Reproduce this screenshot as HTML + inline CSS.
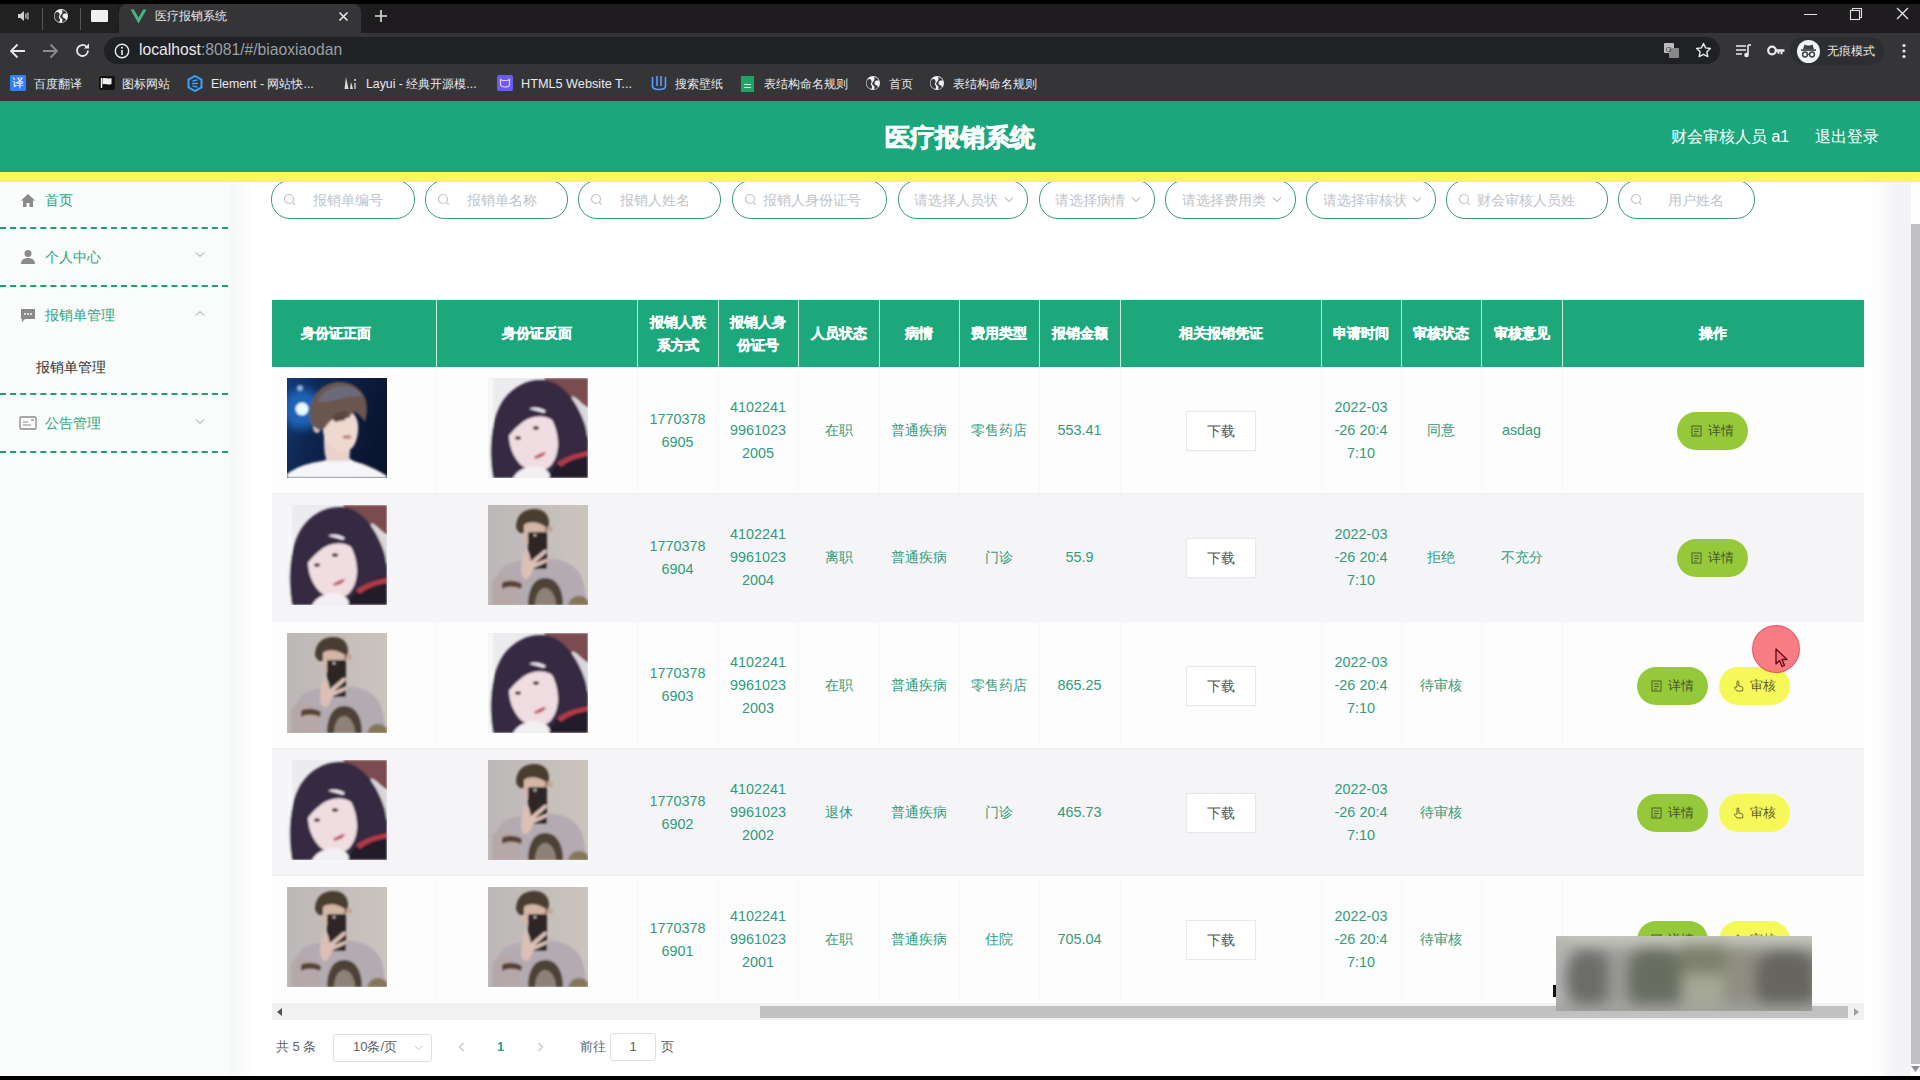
<!DOCTYPE html>
<html><head><meta charset="utf-8">
<style>
*{box-sizing:border-box;margin:0;padding:0}
html,body{width:1920px;height:1080px;overflow:hidden;background:#fff;font-family:"Liberation Sans",sans-serif;position:relative}
.a{position:absolute}
/* chrome */
#topblack{left:0;top:0;width:1920px;height:4px;background:#000}
#tabstrip{left:0;top:4px;width:1920px;height:29px;background:#1e1c1f}
#pinned{left:0;top:4px;width:118px;height:29px;background:#212121;border-radius:0 0 8px 0}
#acttab{left:119px;top:4px;width:242px;height:29px;background:#353538;border-radius:8px 8px 0 0}
#addr{left:0;top:33px;width:1920px;height:35px;background:#353538}
#urlbox{left:104px;top:37px;width:1616px;height:27px;background:#202124;border-radius:14px}
#bm{left:0;top:68px;width:1920px;height:33px;background:#353538}
.ct{color:#e8eaed;font-size:12px;white-space:nowrap;line-height:14px}
/* header */
#hdr{left:0;top:101px;width:1920px;height:71px;background:#1ba77b}
#yel{left:0;top:172px;width:1920px;height:10px;background:#f8f85a;z-index:5}
#side{left:0;top:182px;width:230px;height:898px;background:#fafbfb}
#sideshade{left:230px;top:182px;width:24px;height:898px;background:linear-gradient(90deg,#f6f7f7,#ffffff)}
.dash{left:0;width:228px;height:0;border-top:2px dashed #1f9f76}
.mi{font-size:14px;color:#2ea57c;white-space:nowrap;line-height:16px}

.pill{top:180px;height:38.5px;border:1.5px solid #3b9c7a;border-radius:19px;background:#fff}
.ph{top:191px;font-size:14px;line-height:18px;color:#c0c4cc;white-space:nowrap;overflow:hidden}
.th{-webkit-text-stroke:0.35px #fff;width:120px;display:flex;align-items:center;justify-content:center;text-align:center;color:#fff;font-weight:bold;font-size:14px;line-height:23px}
.td{width:120px;display:flex;align-items:center;justify-content:center;text-align:center;color:#339b7b;font-size:14.4px;line-height:23px}
.dl{width:70px;height:40px;border:1px solid #e8e8ea;background:#fff;border-radius:0;box-shadow:0 0 2px rgba(0,0,0,.04);font-size:14px;color:#555;line-height:38px;text-align:center}
.bt{width:71px;height:38px;border-radius:19px;font-size:13px;line-height:38px;text-align:center;white-space:nowrap;display:flex;align-items:center;justify-content:center;gap:6px}
.bd{background:#96c93a;color:#44562a}
.ba{background:#f6f85a;color:#5e5c2c}
.pg{font-size:13px;color:#606266;line-height:17px;white-space:nowrap}
</style></head><body>

<svg width="0" height="0" style="position:absolute">
<defs>
<filter id="bl" x="-5%" y="-5%" width="110%" height="110%"><feGaussianBlur stdDeviation="1.3"/></filter>
<filter id="bl2" x="-50%" y="-50%" width="200%" height="200%"><feGaussianBlur stdDeviation="4"/></filter>
<linearGradient id="boybg" x1="0" y1="0" x2="1" y2="0.3"><stop offset="0" stop-color="#143a78"/><stop offset="0.35" stop-color="#0e2650"/><stop offset="1" stop-color="#0a1530"/></linearGradient>
<linearGradient id="girlbg" x1="0" y1="0" x2="1" y2="0"><stop offset="0" stop-color="#eeecef"/><stop offset="1" stop-color="#e6dfe2"/></linearGradient>
<linearGradient id="selfbg" x1="0" y1="0" x2="1" y2="0"><stop offset="0" stop-color="#bcb8b8"/><stop offset="1" stop-color="#cbc4bd"/></linearGradient>
<clipPath id="cp"><rect width="100" height="100"/></clipPath>
</defs>
<symbol id="boy" viewBox="0 0 100 100">
<g clip-path="url(#cp)">
<rect width="100" height="100" fill="url(#boybg)"/>
<g filter="url(#bl)">
<circle cx="15" cy="31" r="20" fill="#1d64b8" filter="url(#bl2)"/>
<circle cx="15" cy="31" r="6.5" fill="#e8fbff"/>
<circle cx="13" cy="10" r="3" fill="#8fb2dc"/>
<path d="M0 96c8-6 18-10 30-12 6-1 10-2 12-4h20c3 3 8 4 14 6 10 4 18 8 24 12v2H0z" fill="#f6f5f7"/>
<path d="M37 55c0 12 0 22 3 28h22c1-8 2-18 0-28z" fill="#e8d2cb"/>
<path d="M36 42c0-6 6-12 14-12 12 0 20 6 21 16 1 10-2 20-6 24-4 4-10 5-14 3-8-3-14-10-15-20z" fill="#eed8d0"/>
<ellipse cx="30" cy="48" rx="4" ry="7" fill="#e2c8be"/>
<path d="M24 46c-4-16 2-34 18-40 14-5 30 0 36 14 3 8 2 16 0 24-4-6-8-10-12-10l-4 6h-14c-4 2-8 6-10 10l-6 2c-4-2-6-4-8-6z" fill="#6a5650"/>
<path d="M30 24c5-10 14-16 26-16 9 0 16 4 19 10-6 0-14 0-22 3-8 2-15 3-23 3z" fill="#6c6a7a"/>
<path d="M45 40c4-6 10-8 16-6l-3 8-10 2z" fill="#5a4640"/>
<ellipse cx="60" cy="59" rx="4.5" ry="2" fill="#c48a88"/>
</g></g>
</symbol>
<symbol id="girl" viewBox="0 0 100 100">
<g clip-path="url(#cp)">
<rect width="100" height="100" fill="#ecebee"/>
<g filter="url(#bl)">
<rect x="0" y="0" width="5" height="100" fill="#f8f8fa"/>
<path d="M56 0H100V30C90 22 76 16 62 10z" fill="#7a4c50"/>
<path d="M84 18C92 22 97 28 100 34V58L90 52z" fill="#dcd6da"/>
<path d="M5 100C0 72 3 42 14 24 26 6 46-2 64 4 80 10 92 30 98 50L100 62V100z" fill="#342c42"/>
<path d="M21 57C21 42 30 32 44 31 58 30 68 40 70 54 72 70 68 84 60 90 52 95 40 94 32 86 25 78 21 68 21 57z" fill="#f0dde1"/>
<path d="M19 60C21 42 31 28 46 24 56 22 66 26 73 33L68 45C62 39 54 37 46 39 36 41 28 49 19 60z" fill="#342c42"/>
<path d="M41 31C47 28 53 30 58 33L56 35C50 33 46 32 41 31z" fill="#eae6ee"/>
<path d="M63 40C70 52 72 66 68 84L75 88C79 70 77 50 70 38z" fill="#342c42"/>
<path d="M25 100C29 92 39 88 47 88 55 88 61 92 63 100z" fill="#f2f0f3"/>
<path d="M61 100C65 86 80 76 100 71V100z" fill="#231e2a"/>
<path d="M69 85C77 79 88 75 100 73V78C88 80 80 83 73 89z" fill="#b03a4a"/>
<ellipse cx="48" cy="50" rx="3.2" ry="1.8" fill="#3a2a2e"/>
<ellipse cx="30" cy="60" rx="3" ry="1.8" fill="#3a2a2e"/>
<path d="M46 79C50 76 54 74 58 74 57 78 52 80 47 81z" fill="#c4606a"/>
</g></g>
</symbol>
<symbol id="selfie" viewBox="0 0 100 100">
<g clip-path="url(#cp)">
<rect width="100" height="100" fill="url(#selfbg)"/>
<g filter="url(#bl)">
<path d="M4 100c0-18 4-34 14-40 12-6 26-5 36-6 14-1 26 2 34 10 8 8 10 22 10 36z" fill="#b3aab2"/>
<path d="M4 100V76c4-6 10-8 16-6 8 3 12 12 12 30z" fill="#b6a8a8"/>
<path d="M14 78c4-3 14-3 20 1l-1 5c-6-3-14-3-19 0z" fill="#5a4236"/>
<path d="M40 100c0-16 6-27 17-27s18 10 18 27z" fill="#4e4236"/>
<path d="M47 100c0-9 4-17 10-17s11 8 11 17z" fill="#8e8278"/>
<path d="M80 100c2-6 6-9 11-9 5 0 9 3 9 6v3z" fill="#857658"/>
<path d="M28 22c0-12 8-18 18-18 10 0 15 6 15 14 0 4-2 8-4 10H32c-2-2-4-4-4-6z" fill="#4a3c30"/>
<path d="M36 20c4-4 14-4 22 2l-2 16-20 0z" fill="#d4b6a6"/>
<circle cx="62" cy="24" r="3" fill="#c4a494"/>
<rect x="40" y="27" width="19" height="37" rx="2" fill="#2e2826"/>
<circle cx="47" cy="30" r="1.5" fill="#bbb"/>
<path d="M36 46c2-2 4 0 5 2l2 8 13-11c2-1 4 1 2 3l-11 10 11-4c2 0 3 2 1 3l-13 6-4 8c-2 4-6 4-8 0-2-8 0-17 2-25z" fill="#dcc0b6"/>
</g></g>
</symbol>
</svg>

<div id="topblack" class="a"></div>
<div id="tabstrip" class="a"></div>
<div id="pinned" class="a"></div>
<div id="acttab" class="a"></div>
<div id="addr" class="a"></div>
<div id="urlbox" class="a"></div>
<div id="bm" class="a"></div>


<!-- tab strip contents -->
<svg class="a" style="left:16px;top:9px" width="14" height="14" viewBox="0 0 14 14"><path d="M2 5h2.5L8 2v10L4.5 9H2z" fill="#d0d0d0"/><rect x="9.3" y="4.5" width="1.2" height="5" fill="#d0d0d0"/><rect x="11.3" y="3.5" width="1.2" height="7" fill="#d0d0d0"/></svg>
<div class="a" style="left:42px;top:8px;width:1px;height:22px;background:#555"></div>
<svg class="a" style="left:53px;top:8px" width="16" height="16" viewBox="0 0 16 16"><circle cx="8" cy="8" r="7" fill="#f0f0f0"/><path d="M3 4.5c2-1 3 0 3.5 1.5S5 9 6.5 10.5 6 14 6 14c-2-.5-4.5-3-4.5-6 0-1.3.5-2.5 1.5-3.5zM9 2c2 .3 4 1.5 5 3.5-1.5.3-2.5-.5-3.5.5S9 8.5 10 9.5s2.5 1 3 2.5C12 13.5 10 14.5 9 14.5c.5-1.5 1-3-.5-4S6.5 8.5 8 7s2-3 1-5z" fill="#333"/></svg>
<div class="a" style="left:80px;top:8px;width:1px;height:22px;background:#555"></div>
<div class="a" style="left:91px;top:10px;width:17px;height:12px;background:#f0f0f0;border-radius:1px"></div>
<svg class="a" style="left:130px;top:9px" width="17" height="15" viewBox="0 0 17 15"><path d="M0.5 0.5h3.5l4.5 8 4.5-8h3.5L8.5 14.5z" fill="#41b883"/><path d="M4.2 0.5h2.3l2 3.5 2-3.5h2.3L8.5 8z" fill="#353538"/></svg>
<div class="a ct" style="left:155px;top:9px;font-size:12px;color:#e8eaed">医疗报销系统</div>
<svg class="a" style="left:338px;top:11px" width="11" height="11" viewBox="0 0 11 11"><path d="M1.5 1.5l8 8M9.5 1.5l-8 8" stroke="#e8e8e8" stroke-width="1.6"/></svg>
<svg class="a" style="left:374px;top:9px" width="14" height="14" viewBox="0 0 14 14"><path d="M7 1v12M1 7h12" stroke="#e0e0e0" stroke-width="1.6"/></svg>
<div class="a" style="left:1804px;top:14px;width:13px;height:1px;background:#e0e0e0"></div>
<svg class="a" style="left:1849px;top:7px" width="14" height="14" viewBox="0 0 14 14"><rect x="1.5" y="3.5" width="9" height="9" fill="none" stroke="#e0e0e0" stroke-width="1.1"/><path d="M3.5 3.5V1.5h9v9h-2" fill="none" stroke="#e0e0e0" stroke-width="1.1"/></svg>
<svg class="a" style="left:1896px;top:7px" width="13" height="13" viewBox="0 0 13 13"><path d="M1 1l11 11M12 1L1 12" stroke="#e8e8e8" stroke-width="1.3"/></svg>
<!-- address row -->
<svg class="a" style="left:9px;top:43px" width="17" height="16" viewBox="0 0 17 16"><path d="M16 8H2.5M8.5 1.5L2 8l6.5 6.5" fill="none" stroke="#e8eaed" stroke-width="1.8"/></svg>
<svg class="a" style="left:42px;top:43px" width="17" height="16" viewBox="0 0 17 16"><path d="M1 8h13.5M8.5 1.5L15 8l-6.5 6.5" fill="none" stroke="#8a8c8f" stroke-width="1.8"/></svg>
<svg class="a" style="left:74px;top:42px" width="17" height="17" viewBox="0 0 17 17"><path d="M14 8.5a5.5 5.5 0 1 1-1.6-3.9" fill="none" stroke="#e8eaed" stroke-width="1.8"/><path d="M15 1.5v5h-5z" fill="#e8eaed"/></svg>
<svg class="a" style="left:114px;top:43px" width="16" height="16" viewBox="0 0 16 16"><circle cx="8" cy="8" r="6.7" fill="none" stroke="#e8eaed" stroke-width="1.4"/><rect x="7.2" y="7" width="1.6" height="5" fill="#e8eaed"/><circle cx="8" cy="4.8" r="1" fill="#e8eaed"/></svg>
<div class="a" style="left:139px;top:41px;font-size:15.7px;line-height:18px;white-space:nowrap;color:#e8eaed">localhost<span style="color:#9aa0a6">:8081/#/biaoxiaodan</span></div>
<svg class="a" style="left:1663px;top:42px" width="17" height="17" viewBox="0 0 17 17"><rect x="1" y="1" width="10" height="10" rx="1" fill="#bdbdbd"/><rect x="6" y="6" width="10" height="10" rx="1" fill="#888"/><text x="2.5" y="9.5" font-size="8" fill="#444" font-family="Liberation Sans">G</text></svg>
<svg class="a" style="left:1695px;top:42px" width="17" height="17" viewBox="0 0 17 17"><path d="M8.5 1.5l2.1 4.4 4.8.6-3.5 3.3.9 4.8-4.3-2.3-4.3 2.3.9-4.8L1.6 6.5l4.8-.6z" fill="none" stroke="#e8eaed" stroke-width="1.4" stroke-linejoin="round"/></svg>
<svg class="a" style="left:1735px;top:43px" width="17" height="16" viewBox="0 0 17 16"><path d="M1 3h10M1 7h10M1 11h6" stroke="#e8eaed" stroke-width="1.6"/><path d="M13 2v9.5" stroke="#e8eaed" stroke-width="1.6"/><path d="M13 2h3" stroke="#e8eaed" stroke-width="1.6"/><circle cx="11.5" cy="12" r="2.3" fill="#e8eaed"/></svg>
<svg class="a" style="left:1767px;top:44px" width="18" height="13" viewBox="0 0 18 13"><circle cx="5" cy="6.5" r="3.8" fill="none" stroke="#e8eaed" stroke-width="2.2"/><path d="M8.5 5.3h9v2.4h-2v2.5h-2V7.7h-1v2h-2V7.7H8.5z" fill="#e8eaed"/></svg>
<div class="a" style="left:1790px;top:37px;width:94px;height:28px;border-radius:14px;background:#2d2e31"></div>
<div class="a" style="left:1797px;top:40px;width:23px;height:23px;border-radius:50%;background:#f1f3f4"></div>
<svg class="a" style="left:1799px;top:43px" width="19" height="17" viewBox="0 0 19 17"><path d="M4 6.5l1.5-5 2.5 1h3l2.5-1 1.5 5z" fill="#3c4043"/><rect x="2" y="6.3" width="15" height="1.6" fill="#3c4043"/><circle cx="6" cy="11.5" r="2.4" fill="none" stroke="#3c4043" stroke-width="1.5"/><circle cx="13" cy="11.5" r="2.4" fill="none" stroke="#3c4043" stroke-width="1.5"/><path d="M8.4 11.3h2.2" stroke="#3c4043" stroke-width="1.2"/></svg>
<div class="a ct" style="left:1827px;top:44px;font-size:12px;color:#e8eaed">无痕模式</div>
<svg class="a" style="left:1901px;top:43px" width="6" height="16" viewBox="0 0 6 16"><circle cx="3" cy="2.5" r="1.6" fill="#e8eaed"/><circle cx="3" cy="8" r="1.6" fill="#e8eaed"/><circle cx="3" cy="13.5" r="1.6" fill="#e8eaed"/></svg>
<!-- bookmarks -->
<div class="a" style="left:10px;top:75px;width:16px;height:16px;background:#2f80f5;border-radius:1px;color:#fff;font-size:12px;line-height:16px;text-align:center">译</div>
<div class="a ct" style="left:34px;top:77px">百度翻译</div>
<svg class="a" style="left:99px;top:76px" width="16" height="14" viewBox="0 0 16 14"><rect x="0" y="0" width="16" height="14" rx="2" fill="#111"/><path d="M2.5 2v10" stroke="#eee" stroke-width="1.4"/><path d="M3.5 2.5c3-1.5 5 1 9-.5v6c-4 1.5-6-1-9 .5z" fill="#eee"/></svg>
<div class="a ct" style="left:122px;top:77px">图标网站</div>
<svg class="a" style="left:187px;top:75px" width="16" height="17" viewBox="0 0 16 17"><path d="M8 1l6.5 3.7v7.6L8 16 1.5 12.3V4.7z" fill="none" stroke="#3d9ef5" stroke-width="2"/><path d="M5 8.5h6M5.5 6l5-1M5.5 11l5 1" stroke="#3d9ef5" stroke-width="1.3"/></svg>
<div class="a ct" style="left:211px;top:77px;font-size:12.4px">Element - 网站快...</div>
<svg class="a" style="left:343px;top:76px" width="15" height="14" viewBox="0 0 15 14"><path d="M3 1l-1.5 12h4z" fill="#ddd"/><path d="M8 6l-1 7h3z" fill="#ddd"/><circle cx="12" cy="4" r="1" fill="#ddd"/><path d="M12 7v6" stroke="#ddd" stroke-width="1.3"/></svg>
<div class="a ct" style="left:366px;top:77px;font-size:12.3px">Layui - 经典开源模...</div>
<div class="a" style="left:497px;top:75px;width:16px;height:16px;background:#6a5cf0;border-radius:2px"></div>
<svg class="a" style="left:499px;top:78px" width="12" height="10" viewBox="0 0 12 10"><path d="M1.5 1.5l2 1h5l2-1v5c0 1.5-2 2.5-4.5 2.5S1.5 8 1.5 6.5z" fill="none" stroke="#f0c8ff" stroke-width="1.2"/></svg>
<div class="a ct" style="left:521px;top:77px;font-size:12.7px">HTML5 Website T...</div>
<svg class="a" style="left:651px;top:75px" width="16" height="16" viewBox="0 0 16 16"><path d="M1.5 2v9c0 2.5 2 3.5 6.5 3.5s6.5-1 6.5-3.5V2" fill="none" stroke="#5aa0ff" stroke-width="1.6"/><path d="M6 1v10M10 1v10" stroke="#5aa0ff" stroke-width="1.6"/></svg>
<div class="a ct" style="left:675px;top:77px">搜索壁纸</div>
<div class="a" style="left:741px;top:76px;width:13px;height:16px;background:#1fa463;border-radius:1px"></div>
<div class="a" style="left:744px;top:84px;width:7px;height:4px;border-top:1px solid #cfe;border-bottom:1px solid #cfe"></div>
<div class="a ct" style="left:764px;top:77px">表结构命名规则</div>
<svg class="a" style="left:865px;top:75px" width="16" height="16" viewBox="0 0 16 16"><circle cx="8" cy="8" r="7" fill="#f0f0f0"/><path d="M3 4.5c2-1 3 0 3.5 1.5S5 9 6.5 10.5 6 14 6 14c-2-.5-4.5-3-4.5-6 0-1.3.5-2.5 1.5-3.5zM9 2c2 .3 4 1.5 5 3.5-1.5.3-2.5-.5-3.5.5S9 8.5 10 9.5s2.5 1 3 2.5C12 13.5 10 14.5 9 14.5c.5-1.5 1-3-.5-4S6.5 8.5 8 7s2-3 1-5z" fill="#35363a"/></svg>
<div class="a ct" style="left:889px;top:77px">首页</div>
<svg class="a" style="left:929px;top:75px" width="16" height="16" viewBox="0 0 16 16"><circle cx="8" cy="8" r="7" fill="#f0f0f0"/><path d="M3 4.5c2-1 3 0 3.5 1.5S5 9 6.5 10.5 6 14 6 14c-2-.5-4.5-3-4.5-6 0-1.3.5-2.5 1.5-3.5zM9 2c2 .3 4 1.5 5 3.5-1.5.3-2.5-.5-3.5.5S9 8.5 10 9.5s2.5 1 3 2.5C12 13.5 10 14.5 9 14.5c.5-1.5 1-3-.5-4S6.5 8.5 8 7s2-3 1-5z" fill="#35363a"/></svg>
<div class="a ct" style="left:953px;top:77px">表结构命名规则</div>

<div id="hdr" class="a"></div>
<div id="yel" class="a"></div>
<div id="side" class="a"></div>
<div id="sideshade" class="a"></div>


<div class="a" style="left:0;top:119px;width:1920px;text-align:center;font-size:25px;font-weight:bold;color:#fff;line-height:36px;-webkit-text-stroke:0.8px #fff">医疗报销系统</div>
<div class="a" style="left:1671px;top:127px;font-size:16px;color:#fff;line-height:20px;white-space:nowrap">财会审核人员 a1</div>
<div class="a" style="left:1815px;top:127px;font-size:16px;color:#fff;line-height:20px;white-space:nowrap">退出登录</div>

<!-- sidebar menu -->
<svg class="a" style="left:20px;top:193px" width="16" height="15" viewBox="0 0 16 15"><path d="M8 1L1 7.5h2V14h3.5v-4h3v4H13V7.5h2z" fill="#8a8a8a"/></svg>
<div class="a mi" style="left:45px;top:192px">首页</div>
<div class="a dash" style="top:227px"></div>
<svg class="a" style="left:20px;top:249px" width="16" height="16" viewBox="0 0 16 16"><circle cx="8" cy="4.5" r="3.5" fill="#8a8a8a"/><path d="M1 15c0-4 3-6 7-6s7 2 7 6z" fill="#8a8a8a"/></svg>
<div class="a mi" style="left:45px;top:249px">个人中心</div>
<svg class="a" style="left:195px;top:251px" width="10" height="7" viewBox="0 0 10 7"><path d="M1 1.5l4 4 4-4" fill="none" stroke="#909399" stroke-width="1"/></svg>
<div class="a dash" style="top:285px"></div>
<svg class="a" style="left:20px;top:308px" width="16" height="15" viewBox="0 0 16 15"><path d="M1 1h14v10H5l-3 3v-3H1z" fill="#8a8a8a"/><circle cx="5" cy="6" r="1" fill="#f9fafa"/><circle cx="8" cy="6" r="1" fill="#f9fafa"/><circle cx="11" cy="6" r="1" fill="#f9fafa"/></svg>
<div class="a mi" style="left:45px;top:307px">报销单管理</div>
<svg class="a" style="left:195px;top:310px" width="10" height="7" viewBox="0 0 10 7"><path d="M1 5.5l4-4 4 4" fill="none" stroke="#909399" stroke-width="1"/></svg>
<div class="a" style="left:36px;top:359px;font-size:14px;color:#303133;line-height:16px;white-space:nowrap">报销单管理</div>
<div class="a dash" style="top:393px"></div>
<svg class="a" style="left:19px;top:416px" width="18" height="14" viewBox="0 0 18 14"><rect x="1" y="1" width="16" height="12" rx="1" fill="none" stroke="#8a8a8a" stroke-width="1.3"/><path d="M4 6h5M4 9h8" stroke="#8a8a8a" stroke-width="1.2"/><path d="M12 4h3" stroke="#8a8a8a" stroke-width="1.2"/></svg>
<div class="a mi" style="left:45px;top:415px">公告管理</div>
<svg class="a" style="left:195px;top:418px" width="10" height="7" viewBox="0 0 10 7"><path d="M1 1.5l4 4 4-4" fill="none" stroke="#909399" stroke-width="1"/></svg>
<div class="a dash" style="top:451px"></div>


<!--GEN-->
<div class="a pill" style="left:271px;width:144px"></div>
<svg class="a" style="left:283px;top:193px" width="13" height="13" viewBox="0 0 13 13"><circle cx="6" cy="6" r="4.5" fill="none" stroke="#c0c4cc" stroke-width="1.2"/><path d="M9.3 9.3l2.5 2.5" stroke="#c0c4cc" stroke-width="1.2"/></svg>
<div class="a ph" style="left:313px;width:88px">报销单编号</div>
<div class="a pill" style="left:425px;width:143px"></div>
<svg class="a" style="left:437px;top:193px" width="13" height="13" viewBox="0 0 13 13"><circle cx="6" cy="6" r="4.5" fill="none" stroke="#c0c4cc" stroke-width="1.2"/><path d="M9.3 9.3l2.5 2.5" stroke="#c0c4cc" stroke-width="1.2"/></svg>
<div class="a ph" style="left:467px;width:87px">报销单名称</div>
<div class="a pill" style="left:578px;width:143px"></div>
<svg class="a" style="left:590px;top:193px" width="13" height="13" viewBox="0 0 13 13"><circle cx="6" cy="6" r="4.5" fill="none" stroke="#c0c4cc" stroke-width="1.2"/><path d="M9.3 9.3l2.5 2.5" stroke="#c0c4cc" stroke-width="1.2"/></svg>
<div class="a ph" style="left:620px;width:87px">报销人姓名</div>
<div class="a pill" style="left:732px;width:155px"></div>
<svg class="a" style="left:744px;top:193px" width="13" height="13" viewBox="0 0 13 13"><circle cx="6" cy="6" r="4.5" fill="none" stroke="#c0c4cc" stroke-width="1.2"/><path d="M9.3 9.3l2.5 2.5" stroke="#c0c4cc" stroke-width="1.2"/></svg>
<div class="a ph" style="left:763px;width:110px">报销人身份证号</div>
<div class="a pill" style="left:898px;width:130px"></div>
<div class="a ph" style="left:914px;width:84px">请选择人员状</div>
<svg class="a" style="left:1004px;top:196px" width="10" height="7" viewBox="0 0 10 7"><path d="M1 1.5l4 4 4-4" fill="none" stroke="#c0c4cc" stroke-width="1.1"/></svg>
<div class="a pill" style="left:1039px;width:116px"></div>
<div class="a ph" style="left:1055px;width:70px">请选择病情</div>
<svg class="a" style="left:1131px;top:196px" width="10" height="7" viewBox="0 0 10 7"><path d="M1 1.5l4 4 4-4" fill="none" stroke="#c0c4cc" stroke-width="1.1"/></svg>
<div class="a pill" style="left:1165px;width:131px"></div>
<div class="a ph" style="left:1182px;width:84px">请选择费用类</div>
<svg class="a" style="left:1272px;top:196px" width="10" height="7" viewBox="0 0 10 7"><path d="M1 1.5l4 4 4-4" fill="none" stroke="#c0c4cc" stroke-width="1.1"/></svg>
<div class="a pill" style="left:1306px;width:130px"></div>
<div class="a ph" style="left:1323px;width:83px">请选择审核状</div>
<svg class="a" style="left:1412px;top:196px" width="10" height="7" viewBox="0 0 10 7"><path d="M1 1.5l4 4 4-4" fill="none" stroke="#c0c4cc" stroke-width="1.1"/></svg>
<div class="a pill" style="left:1446px;width:162px"></div>
<svg class="a" style="left:1458px;top:193px" width="13" height="13" viewBox="0 0 13 13"><circle cx="6" cy="6" r="4.5" fill="none" stroke="#c0c4cc" stroke-width="1.2"/><path d="M9.3 9.3l2.5 2.5" stroke="#c0c4cc" stroke-width="1.2"/></svg>
<div class="a ph" style="left:1477px;width:117px">财会审核人员姓</div>
<div class="a pill" style="left:1618px;width:137px"></div>
<svg class="a" style="left:1630px;top:193px" width="13" height="13" viewBox="0 0 13 13"><circle cx="6" cy="6" r="4.5" fill="none" stroke="#c0c4cc" stroke-width="1.2"/><path d="M9.3 9.3l2.5 2.5" stroke="#c0c4cc" stroke-width="1.2"/></svg>
<div class="a ph" style="left:1668px;width:73px">用户姓名</div>
<div class="a" style="left:272px;top:300px;width:1592px;height:67px;background:#1ca87b"></div>
<div class="a" style="left:436px;top:300px;width:1px;height:67px;background:#e9f6ef;opacity:.85"></div>
<div class="a" style="left:637px;top:300px;width:1px;height:67px;background:#e9f6ef;opacity:.85"></div>
<div class="a" style="left:718px;top:300px;width:1px;height:67px;background:#e9f6ef;opacity:.85"></div>
<div class="a" style="left:798px;top:300px;width:1px;height:67px;background:#e9f6ef;opacity:.85"></div>
<div class="a" style="left:879px;top:300px;width:1px;height:67px;background:#e9f6ef;opacity:.85"></div>
<div class="a" style="left:959px;top:300px;width:1px;height:67px;background:#e9f6ef;opacity:.85"></div>
<div class="a" style="left:1039px;top:300px;width:1px;height:67px;background:#e9f6ef;opacity:.85"></div>
<div class="a" style="left:1120px;top:300px;width:1px;height:67px;background:#e9f6ef;opacity:.85"></div>
<div class="a" style="left:1321px;top:300px;width:1px;height:67px;background:#e9f6ef;opacity:.85"></div>
<div class="a" style="left:1401px;top:300px;width:1px;height:67px;background:#e9f6ef;opacity:.85"></div>
<div class="a" style="left:1481px;top:300px;width:1px;height:67px;background:#e9f6ef;opacity:.85"></div>
<div class="a" style="left:1562px;top:300px;width:1px;height:67px;background:#e9f6ef;opacity:.85"></div>
<div class="a th" style="left:276.0px;top:300px;height:67px">身份证正面</div>
<div class="a th" style="left:476.5px;top:300px;height:67px">身份证反面</div>
<div class="a th" style="left:617.5px;top:300px;height:67px">报销人联<br>系方式</div>
<div class="a th" style="left:698.0px;top:300px;height:67px">报销人身<br>份证号</div>
<div class="a th" style="left:778.5px;top:300px;height:67px">人员状态</div>
<div class="a th" style="left:859.0px;top:300px;height:67px">病情</div>
<div class="a th" style="left:939.0px;top:300px;height:67px">费用类型</div>
<div class="a th" style="left:1019.5px;top:300px;height:67px">报销金额</div>
<div class="a th" style="left:1160.5px;top:300px;height:67px">相关报销凭证</div>
<div class="a th" style="left:1301.0px;top:300px;height:67px">申请时间</div>
<div class="a th" style="left:1381.0px;top:300px;height:67px">审核状态</div>
<div class="a th" style="left:1461.5px;top:300px;height:67px">审核意见</div>
<div class="a th" style="left:1653.0px;top:300px;height:67px">操作</div>
<div class="a" style="left:272px;top:367.00px;width:1592px;height:127.33px;background:#fdfdfe"></div>
<div class="a" style="left:436px;top:367.00px;width:1px;height:127.33px;background:#f6f7f9"></div>
<div class="a" style="left:637px;top:367.00px;width:1px;height:127.33px;background:#f6f7f9"></div>
<div class="a" style="left:718px;top:367.00px;width:1px;height:127.33px;background:#f6f7f9"></div>
<div class="a" style="left:798px;top:367.00px;width:1px;height:127.33px;background:#f6f7f9"></div>
<div class="a" style="left:879px;top:367.00px;width:1px;height:127.33px;background:#f6f7f9"></div>
<div class="a" style="left:959px;top:367.00px;width:1px;height:127.33px;background:#f6f7f9"></div>
<div class="a" style="left:1039px;top:367.00px;width:1px;height:127.33px;background:#f6f7f9"></div>
<div class="a" style="left:1120px;top:367.00px;width:1px;height:127.33px;background:#f6f7f9"></div>
<div class="a" style="left:1321px;top:367.00px;width:1px;height:127.33px;background:#f6f7f9"></div>
<div class="a" style="left:1401px;top:367.00px;width:1px;height:127.33px;background:#f6f7f9"></div>
<div class="a" style="left:1481px;top:367.00px;width:1px;height:127.33px;background:#f6f7f9"></div>
<div class="a" style="left:1562px;top:367.00px;width:1px;height:127.33px;background:#f6f7f9"></div>
<div class="a" style="left:272px;top:493.33px;width:1592px;height:1px;background:#eef0f3"></div>
<div class="a" style="left:272px;top:494.33px;width:1592px;height:127.33px;background:#f5f5f8"></div>
<div class="a" style="left:436px;top:494.33px;width:1px;height:127.33px;background:#f6f7f9"></div>
<div class="a" style="left:637px;top:494.33px;width:1px;height:127.33px;background:#f6f7f9"></div>
<div class="a" style="left:718px;top:494.33px;width:1px;height:127.33px;background:#f6f7f9"></div>
<div class="a" style="left:798px;top:494.33px;width:1px;height:127.33px;background:#f6f7f9"></div>
<div class="a" style="left:879px;top:494.33px;width:1px;height:127.33px;background:#f6f7f9"></div>
<div class="a" style="left:959px;top:494.33px;width:1px;height:127.33px;background:#f6f7f9"></div>
<div class="a" style="left:1039px;top:494.33px;width:1px;height:127.33px;background:#f6f7f9"></div>
<div class="a" style="left:1120px;top:494.33px;width:1px;height:127.33px;background:#f6f7f9"></div>
<div class="a" style="left:1321px;top:494.33px;width:1px;height:127.33px;background:#f6f7f9"></div>
<div class="a" style="left:1401px;top:494.33px;width:1px;height:127.33px;background:#f6f7f9"></div>
<div class="a" style="left:1481px;top:494.33px;width:1px;height:127.33px;background:#f6f7f9"></div>
<div class="a" style="left:1562px;top:494.33px;width:1px;height:127.33px;background:#f6f7f9"></div>
<div class="a" style="left:272px;top:620.66px;width:1592px;height:1px;background:#eef0f3"></div>
<div class="a" style="left:272px;top:621.66px;width:1592px;height:127.33px;background:#fdfdfe"></div>
<div class="a" style="left:436px;top:621.66px;width:1px;height:127.33px;background:#f6f7f9"></div>
<div class="a" style="left:637px;top:621.66px;width:1px;height:127.33px;background:#f6f7f9"></div>
<div class="a" style="left:718px;top:621.66px;width:1px;height:127.33px;background:#f6f7f9"></div>
<div class="a" style="left:798px;top:621.66px;width:1px;height:127.33px;background:#f6f7f9"></div>
<div class="a" style="left:879px;top:621.66px;width:1px;height:127.33px;background:#f6f7f9"></div>
<div class="a" style="left:959px;top:621.66px;width:1px;height:127.33px;background:#f6f7f9"></div>
<div class="a" style="left:1039px;top:621.66px;width:1px;height:127.33px;background:#f6f7f9"></div>
<div class="a" style="left:1120px;top:621.66px;width:1px;height:127.33px;background:#f6f7f9"></div>
<div class="a" style="left:1321px;top:621.66px;width:1px;height:127.33px;background:#f6f7f9"></div>
<div class="a" style="left:1401px;top:621.66px;width:1px;height:127.33px;background:#f6f7f9"></div>
<div class="a" style="left:1481px;top:621.66px;width:1px;height:127.33px;background:#f6f7f9"></div>
<div class="a" style="left:1562px;top:621.66px;width:1px;height:127.33px;background:#f6f7f9"></div>
<div class="a" style="left:272px;top:747.99px;width:1592px;height:1px;background:#eef0f3"></div>
<div class="a" style="left:272px;top:748.99px;width:1592px;height:127.33px;background:#f5f5f8"></div>
<div class="a" style="left:436px;top:748.99px;width:1px;height:127.33px;background:#f6f7f9"></div>
<div class="a" style="left:637px;top:748.99px;width:1px;height:127.33px;background:#f6f7f9"></div>
<div class="a" style="left:718px;top:748.99px;width:1px;height:127.33px;background:#f6f7f9"></div>
<div class="a" style="left:798px;top:748.99px;width:1px;height:127.33px;background:#f6f7f9"></div>
<div class="a" style="left:879px;top:748.99px;width:1px;height:127.33px;background:#f6f7f9"></div>
<div class="a" style="left:959px;top:748.99px;width:1px;height:127.33px;background:#f6f7f9"></div>
<div class="a" style="left:1039px;top:748.99px;width:1px;height:127.33px;background:#f6f7f9"></div>
<div class="a" style="left:1120px;top:748.99px;width:1px;height:127.33px;background:#f6f7f9"></div>
<div class="a" style="left:1321px;top:748.99px;width:1px;height:127.33px;background:#f6f7f9"></div>
<div class="a" style="left:1401px;top:748.99px;width:1px;height:127.33px;background:#f6f7f9"></div>
<div class="a" style="left:1481px;top:748.99px;width:1px;height:127.33px;background:#f6f7f9"></div>
<div class="a" style="left:1562px;top:748.99px;width:1px;height:127.33px;background:#f6f7f9"></div>
<div class="a" style="left:272px;top:875.32px;width:1592px;height:1px;background:#eef0f3"></div>
<div class="a" style="left:272px;top:876.32px;width:1592px;height:127.33px;background:#fdfdfe"></div>
<div class="a" style="left:436px;top:876.32px;width:1px;height:127.33px;background:#f6f7f9"></div>
<div class="a" style="left:637px;top:876.32px;width:1px;height:127.33px;background:#f6f7f9"></div>
<div class="a" style="left:718px;top:876.32px;width:1px;height:127.33px;background:#f6f7f9"></div>
<div class="a" style="left:798px;top:876.32px;width:1px;height:127.33px;background:#f6f7f9"></div>
<div class="a" style="left:879px;top:876.32px;width:1px;height:127.33px;background:#f6f7f9"></div>
<div class="a" style="left:959px;top:876.32px;width:1px;height:127.33px;background:#f6f7f9"></div>
<div class="a" style="left:1039px;top:876.32px;width:1px;height:127.33px;background:#f6f7f9"></div>
<div class="a" style="left:1120px;top:876.32px;width:1px;height:127.33px;background:#f6f7f9"></div>
<div class="a" style="left:1321px;top:876.32px;width:1px;height:127.33px;background:#f6f7f9"></div>
<div class="a" style="left:1401px;top:876.32px;width:1px;height:127.33px;background:#f6f7f9"></div>
<div class="a" style="left:1481px;top:876.32px;width:1px;height:127.33px;background:#f6f7f9"></div>
<div class="a" style="left:1562px;top:876.32px;width:1px;height:127.33px;background:#f6f7f9"></div>
<div class="a" style="left:272px;top:1002.65px;width:1592px;height:1px;background:#eef0f3"></div>
<svg class="a" style="left:287px;top:378.00px" width="100" height="100"><use href="#boy"/></svg>
<svg class="a" style="left:488px;top:378.00px" width="100" height="100"><use href="#girl"/></svg>
<div class="a td" style="left:617.5px;top:367.00px;height:127.33px">1770378<br>6905</div>
<div class="a td" style="left:698.0px;top:367.00px;height:127.33px">4102241<br>9961023<br>2005</div>
<div class="a td" style="left:778.5px;top:367.00px;height:127.33px">在职</div>
<div class="a td" style="left:859.0px;top:367.00px;height:127.33px">普通疾病</div>
<div class="a td" style="left:939.0px;top:367.00px;height:127.33px">零售药店</div>
<div class="a td" style="left:1019.5px;top:367.00px;height:127.33px">553.41</div>
<div class="a td" style="left:1301.0px;top:367.00px;height:127.33px">2022-03<br>-26 20:4<br>7:10</div>
<div class="a td" style="left:1381.0px;top:367.00px;height:127.33px">同意</div>
<div class="a td" style="left:1461.5px;top:367.00px;height:127.33px">asdag</div>
<div class="a dl" style="left:1186px;top:411.00px">下载</div>
<div class="a bt bd" style="left:1677px;top:412.00px"><svg width="11" height="12" viewBox="0 0 11 12"><rect x="1" y="1" width="9" height="10" fill="none" stroke="#4a5a2a" stroke-width="1"/><path d="M3 4h5M3 6.5h5M3 9h3" stroke="#4a5a2a" stroke-width=".9"/></svg>详情</div>
<svg class="a" style="left:287px;top:505.33px" width="100" height="100"><use href="#girl"/></svg>
<svg class="a" style="left:488px;top:505.33px" width="100" height="100"><use href="#selfie"/></svg>
<div class="a td" style="left:617.5px;top:494.33px;height:127.33px">1770378<br>6904</div>
<div class="a td" style="left:698.0px;top:494.33px;height:127.33px">4102241<br>9961023<br>2004</div>
<div class="a td" style="left:778.5px;top:494.33px;height:127.33px">离职</div>
<div class="a td" style="left:859.0px;top:494.33px;height:127.33px">普通疾病</div>
<div class="a td" style="left:939.0px;top:494.33px;height:127.33px">门诊</div>
<div class="a td" style="left:1019.5px;top:494.33px;height:127.33px">55.9</div>
<div class="a td" style="left:1301.0px;top:494.33px;height:127.33px">2022-03<br>-26 20:4<br>7:10</div>
<div class="a td" style="left:1381.0px;top:494.33px;height:127.33px">拒绝</div>
<div class="a td" style="left:1461.5px;top:494.33px;height:127.33px">不充分</div>
<div class="a dl" style="left:1186px;top:538.33px">下载</div>
<div class="a bt bd" style="left:1677px;top:539.33px"><svg width="11" height="12" viewBox="0 0 11 12"><rect x="1" y="1" width="9" height="10" fill="none" stroke="#4a5a2a" stroke-width="1"/><path d="M3 4h5M3 6.5h5M3 9h3" stroke="#4a5a2a" stroke-width=".9"/></svg>详情</div>
<svg class="a" style="left:287px;top:632.66px" width="100" height="100"><use href="#selfie"/></svg>
<svg class="a" style="left:488px;top:632.66px" width="100" height="100"><use href="#girl"/></svg>
<div class="a td" style="left:617.5px;top:621.66px;height:127.33px">1770378<br>6903</div>
<div class="a td" style="left:698.0px;top:621.66px;height:127.33px">4102241<br>9961023<br>2003</div>
<div class="a td" style="left:778.5px;top:621.66px;height:127.33px">在职</div>
<div class="a td" style="left:859.0px;top:621.66px;height:127.33px">普通疾病</div>
<div class="a td" style="left:939.0px;top:621.66px;height:127.33px">零售药店</div>
<div class="a td" style="left:1019.5px;top:621.66px;height:127.33px">865.25</div>
<div class="a td" style="left:1301.0px;top:621.66px;height:127.33px">2022-03<br>-26 20:4<br>7:10</div>
<div class="a td" style="left:1381.0px;top:621.66px;height:127.33px">待审核</div>
<div class="a td" style="left:1461.5px;top:621.66px;height:127.33px"></div>
<div class="a dl" style="left:1186px;top:665.66px">下载</div>
<div class="a bt bd" style="left:1637px;top:666.66px"><svg width="11" height="12" viewBox="0 0 11 12"><rect x="1" y="1" width="9" height="10" fill="none" stroke="#4a5a2a" stroke-width="1"/><path d="M3 4h5M3 6.5h5M3 9h3" stroke="#4a5a2a" stroke-width=".9"/></svg>详情</div>
<div class="a bt ba" style="left:1719px;top:666.66px"><svg width="11" height="12" viewBox="0 0 11 12"><path d="M4 7V1.8a.9.9 0 0 1 1.8 0V6l3 .8c.8.2 1.2.8 1.1 1.6l-.4 2.6H4.2L1.5 8.2c-.5-.6.3-1.5 1-1z" fill="none" stroke="#5a5a2a" stroke-width=".9"/></svg>审核</div>
<svg class="a" style="left:287px;top:759.99px" width="100" height="100"><use href="#girl"/></svg>
<svg class="a" style="left:488px;top:759.99px" width="100" height="100"><use href="#selfie"/></svg>
<div class="a td" style="left:617.5px;top:748.99px;height:127.33px">1770378<br>6902</div>
<div class="a td" style="left:698.0px;top:748.99px;height:127.33px">4102241<br>9961023<br>2002</div>
<div class="a td" style="left:778.5px;top:748.99px;height:127.33px">退休</div>
<div class="a td" style="left:859.0px;top:748.99px;height:127.33px">普通疾病</div>
<div class="a td" style="left:939.0px;top:748.99px;height:127.33px">门诊</div>
<div class="a td" style="left:1019.5px;top:748.99px;height:127.33px">465.73</div>
<div class="a td" style="left:1301.0px;top:748.99px;height:127.33px">2022-03<br>-26 20:4<br>7:10</div>
<div class="a td" style="left:1381.0px;top:748.99px;height:127.33px">待审核</div>
<div class="a td" style="left:1461.5px;top:748.99px;height:127.33px"></div>
<div class="a dl" style="left:1186px;top:792.99px">下载</div>
<div class="a bt bd" style="left:1637px;top:793.99px"><svg width="11" height="12" viewBox="0 0 11 12"><rect x="1" y="1" width="9" height="10" fill="none" stroke="#4a5a2a" stroke-width="1"/><path d="M3 4h5M3 6.5h5M3 9h3" stroke="#4a5a2a" stroke-width=".9"/></svg>详情</div>
<div class="a bt ba" style="left:1719px;top:793.99px"><svg width="11" height="12" viewBox="0 0 11 12"><path d="M4 7V1.8a.9.9 0 0 1 1.8 0V6l3 .8c.8.2 1.2.8 1.1 1.6l-.4 2.6H4.2L1.5 8.2c-.5-.6.3-1.5 1-1z" fill="none" stroke="#5a5a2a" stroke-width=".9"/></svg>审核</div>
<svg class="a" style="left:287px;top:887.32px" width="100" height="100"><use href="#selfie"/></svg>
<svg class="a" style="left:488px;top:887.32px" width="100" height="100"><use href="#selfie"/></svg>
<div class="a td" style="left:617.5px;top:876.32px;height:127.33px">1770378<br>6901</div>
<div class="a td" style="left:698.0px;top:876.32px;height:127.33px">4102241<br>9961023<br>2001</div>
<div class="a td" style="left:778.5px;top:876.32px;height:127.33px">在职</div>
<div class="a td" style="left:859.0px;top:876.32px;height:127.33px">普通疾病</div>
<div class="a td" style="left:939.0px;top:876.32px;height:127.33px">住院</div>
<div class="a td" style="left:1019.5px;top:876.32px;height:127.33px">705.04</div>
<div class="a td" style="left:1301.0px;top:876.32px;height:127.33px">2022-03<br>-26 20:4<br>7:10</div>
<div class="a td" style="left:1381.0px;top:876.32px;height:127.33px">待审核</div>
<div class="a td" style="left:1461.5px;top:876.32px;height:127.33px"></div>
<div class="a dl" style="left:1186px;top:920.32px">下载</div>
<div class="a bt bd" style="left:1637px;top:921.32px"><svg width="11" height="12" viewBox="0 0 11 12"><rect x="1" y="1" width="9" height="10" fill="none" stroke="#4a5a2a" stroke-width="1"/><path d="M3 4h5M3 6.5h5M3 9h3" stroke="#4a5a2a" stroke-width=".9"/></svg>详情</div>
<div class="a bt ba" style="left:1719px;top:921.32px"><svg width="11" height="12" viewBox="0 0 11 12"><path d="M4 7V1.8a.9.9 0 0 1 1.8 0V6l3 .8c.8.2 1.2.8 1.1 1.6l-.4 2.6H4.2L1.5 8.2c-.5-.6.3-1.5 1-1z" fill="none" stroke="#5a5a2a" stroke-width=".9"/></svg>审核</div>
<!--/GEN-->
<!-- horizontal scrollbar -->
<div class="a" style="left:272px;top:1003px;width:1592px;height:17px;background:#f1f1f1"></div>
<div class="a" style="left:760px;top:1006px;width:1088px;height:12px;background:#c1c1c1"></div>
<svg class="a" style="left:277px;top:1008px" width="6" height="8" viewBox="0 0 6 8"><path d="M5 0v8L0 4z" fill="#505050"/></svg>
<svg class="a" style="left:1853px;top:1008px" width="6" height="8" viewBox="0 0 6 8"><path d="M1 0v8l5-4z" fill="#a0a0a0"/></svg>
<!-- right gray zone + vertical scrollbar -->
<div class="a" style="left:1864px;top:182px;width:47px;height:894px;background:linear-gradient(90deg,#fff 0,#fbfbfc 40%,#f4f3f7 60%,#f4f3f7 100%)"></div>
<div class="a" style="left:1911px;top:224px;width:9px;height:840px;background:#c1c0c5"></div>
<svg class="a" style="left:1911px;top:1066px" width="9" height="6" viewBox="0 0 9 6"><path d="M0 0h9L4.5 6z" fill="#909090"/></svg>
<div class="a" style="left:0;top:1076px;width:1920px;height:4px;background:#000"></div>
<!-- pagination -->
<div class="a pg" style="left:276px;top:1038px">共 5 条</div>
<div class="a" style="left:333px;top:1034px;width:99px;height:28px;border:1px solid #dcdfe6;border-radius:3px;background:#fff"></div>
<div class="a pg" style="left:353px;top:1038px">10条/页</div>
<svg class="a" style="left:414px;top:1045px" width="9" height="6" viewBox="0 0 9 6"><path d="M1 1l3.5 3.5L8 1" fill="none" stroke="#c0c4cc" stroke-width="1"/></svg>
<svg class="a" style="left:458px;top:1042px" width="7" height="10" viewBox="0 0 7 10"><path d="M5.5 1L1.5 5l4 4" fill="none" stroke="#c0c4cc" stroke-width="1.2"/></svg>
<div class="a" style="left:497px;top:1038px;font-size:13px;font-weight:bold;color:#26a27a;line-height:17px">1</div>
<svg class="a" style="left:537px;top:1042px" width="7" height="10" viewBox="0 0 7 10"><path d="M1.5 1l4 4-4 4" fill="none" stroke="#c0c4cc" stroke-width="1.2"/></svg>
<div class="a pg" style="left:580px;top:1038px">前往</div>
<div class="a" style="left:610px;top:1033px;width:46px;height:28px;border:1px solid #dcdfe6;border-radius:3px;background:#fff;font-size:13px;color:#606266;text-align:center;line-height:26px">1</div>
<div class="a pg" style="left:661px;top:1038px">页</div>
<!-- red click circle -->
<div class="a" style="left:1752px;top:625px;width:48px;height:48px;border-radius:50%;background:rgba(249,112,122,.92);border:1px solid rgba(190,50,70,.45)"></div>
<svg class="a" style="left:1775px;top:648px" width="13" height="20" viewBox="0 0 13 20"><path d="M1 1v15l3.5-3.5 2.5 6 2.5-1-2.5-6H12z" fill="rgba(248,110,120,1)" stroke="#5a0a14" stroke-width="1.3" stroke-linejoin="round"/></svg>
<!-- blurred overlay -->
<div class="a" style="left:1553px;top:985px;width:4px;height:12px;background:#111"></div>
<div class="a" style="left:1556px;top:936px;width:256px;height:75px;overflow:hidden;background:#9a9a94">
<div class="a" style="left:-20px;top:-20px;width:300px;height:115px;filter:blur(7px)">
<div class="a" style="left:0;top:0;width:300px;height:30px;background:#c6c7bb"></div>
<div class="a" style="left:0;top:20px;width:34px;height:95px;background:#b4b4b2"></div>
<div class="a" style="left:30px;top:35px;width:45px;height:55px;border-radius:40%;background:#6c6c6a"></div>
<div class="a" style="left:72px;top:30px;width:22px;height:70px;background:#9c9c98"></div>
<div class="a" style="left:92px;top:32px;width:55px;height:62px;border-radius:35%;background:#686d60"></div>
<div class="a" style="left:145px;top:28px;width:45px;height:30px;background:#7c806c"></div>
<div class="a" style="left:145px;top:58px;width:45px;height:50px;background:#a6a896"></div>
<div class="a" style="left:188px;top:30px;width:35px;height:75px;background:#8e8e82"></div>
<div class="a" style="left:220px;top:34px;width:60px;height:60px;border-radius:35%;background:#66665f"></div>
<div class="a" style="left:0;top:88px;width:300px;height:27px;background:#a2a29e"></div>
</div></div>


</body></html>
